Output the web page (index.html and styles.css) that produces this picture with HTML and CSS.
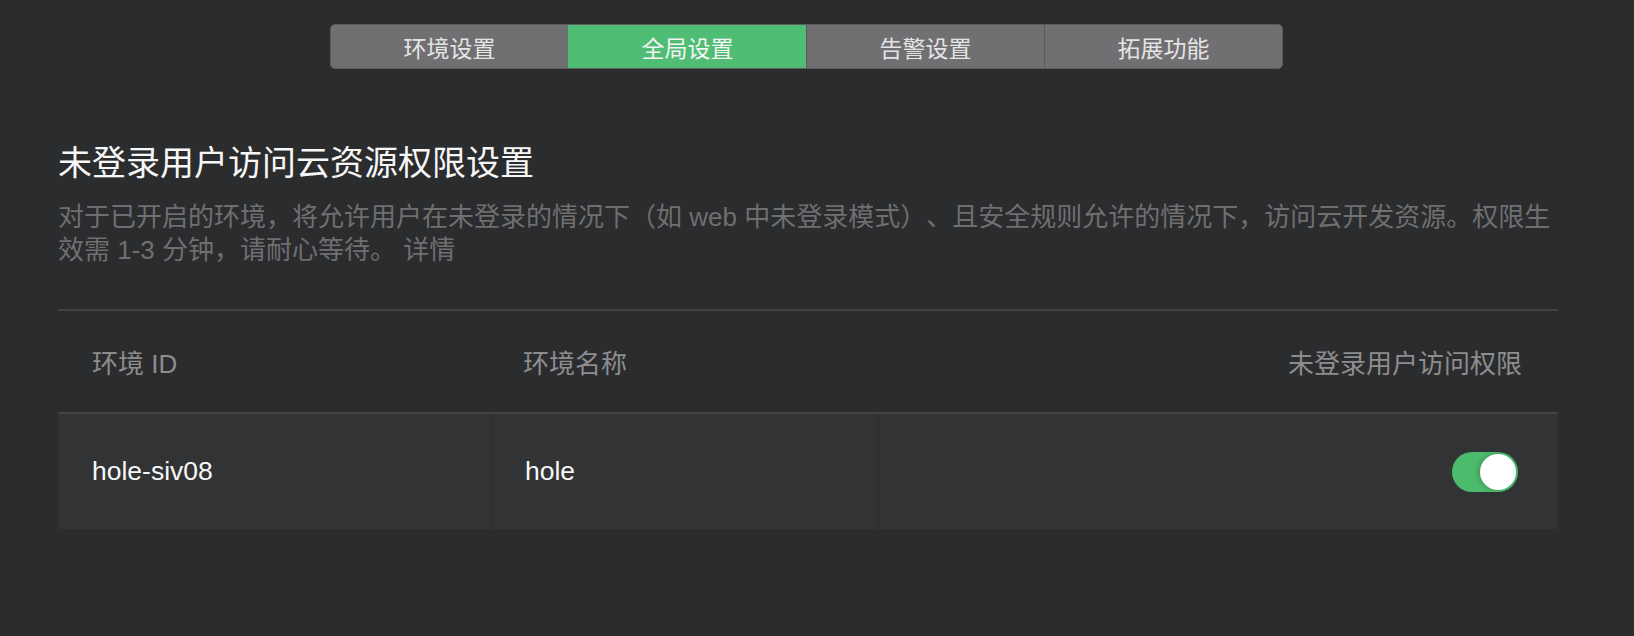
FILE: index.html
```html
<!DOCTYPE html>
<html lang="zh-CN">
<head>
<meta charset="utf-8">
<title>全局设置</title>
<link rel="stylesheet" href="styles.css">
</head>
<body>
<div class="page">
  <nav class="tabs">
    <div class="tab">环境设置</div>
    <div class="tab active">全局设置</div>
    <div class="tab">告警设置</div>
    <div class="tab">拓展功能</div>
  </nav>

  <h1 class="title">未登录用户访问云资源权限设置</h1>
  <p class="desc">对于已开启的环境，将允许用户在未登录的情况下（如 web 中未登录模式）、且安全规则允许的情况下，访问云开发资源。权限生效需 1-3 分钟，请耐心等待。 详情</p>

  <div class="table">
    <div class="thead">
      <div class="cell c1">环境 ID</div>
      <div class="cell c2">环境名称</div>
      <div class="cell c3">未登录用户访问权限</div>
    </div>
    <div class="trow">
      <div class="cell c1">hole-siv08</div>
      <div class="cell c2">hole</div>
      <div class="cell c3"><span class="switch on"><span class="knob"></span></span></div>
    </div>
  </div>
</div>
</body>
</html>
```

FILE: styles.css
```css
html, body {
  margin: 0;
  padding: 0;
  background: #2b2c2e;
}
body {
  font-family: "Liberation Sans", "Noto Sans CJK SC", sans-serif;
  color: #f2f2f2;
  text-spacing-trim: space-all;
}
.page {
  width: 1500px;
  padding: 24px 0 0 58px;
}
.tabs {
  display: flex;
  width: 953px;
  height: 45px;
  margin: 0 0 0 272px;
  box-sizing: border-box;
  border: 1px solid #5c5c5e;
  border-radius: 5px;
  overflow: hidden;
  background: #707072;
}
.tab {
  flex: 1;
  display: flex;
  align-items: center;
  justify-content: center;
  font-size: 23px;
  color: #e4e4e4;
  border-left: 1px solid #5a5a5c;
}
.tab:first-child { border-left: none; }
.tab.active {
  background: #4fbd73;
  color: #f4f4f4;
  border-left-color: #4fbd73;
}
.title {
  margin: 70px 0 0 0;
  font-size: 34px;
  line-height: 48px;
  font-weight: normal;
  color: #f7f7f7;
}
.desc {
  margin: 14px 0 0 0;
  font-size: 26px;
  line-height: 33px;
  color: #6f6f71;
}
.table {
  margin-top: 42px;
  border-top: 2px solid #414244;
}
.thead, .trow {
  display: flex;
}
.thead {
  height: 101px;
  border-bottom: 2px solid #434446;
  color: #8d8d8e;
  font-size: 26px;
}
.trow {
  height: 115px;
  background: #323335;
  color: #f7f7f7;
  font-size: 26.5px;
}
.cell {
  display: flex;
  align-items: center;
  box-sizing: border-box;
}
.c1 { width: 433px; padding-left: 34px; }
.c2 { width: 386px; padding-left: 32px; }
.c3 { flex: 1; justify-content: flex-end; padding-right: 36px; }
.trow .c2, .trow .c3 { border-left: 2px solid #2d2e30; }
.trow .c3 { padding-right: 40px; }
.switch {
  position: relative;
  display: inline-block;
  width: 66px;
  height: 40px;
  border-radius: 20px;
  background: #4cbb6c;
}
.switch .knob {
  position: absolute;
  top: 2px;
  right: 2px;
  width: 36px;
  height: 36px;
  border-radius: 50%;
  background: #ffffff;
  box-shadow: -2px 0 4px rgba(0, 0, 0, 0.18);
}
```
